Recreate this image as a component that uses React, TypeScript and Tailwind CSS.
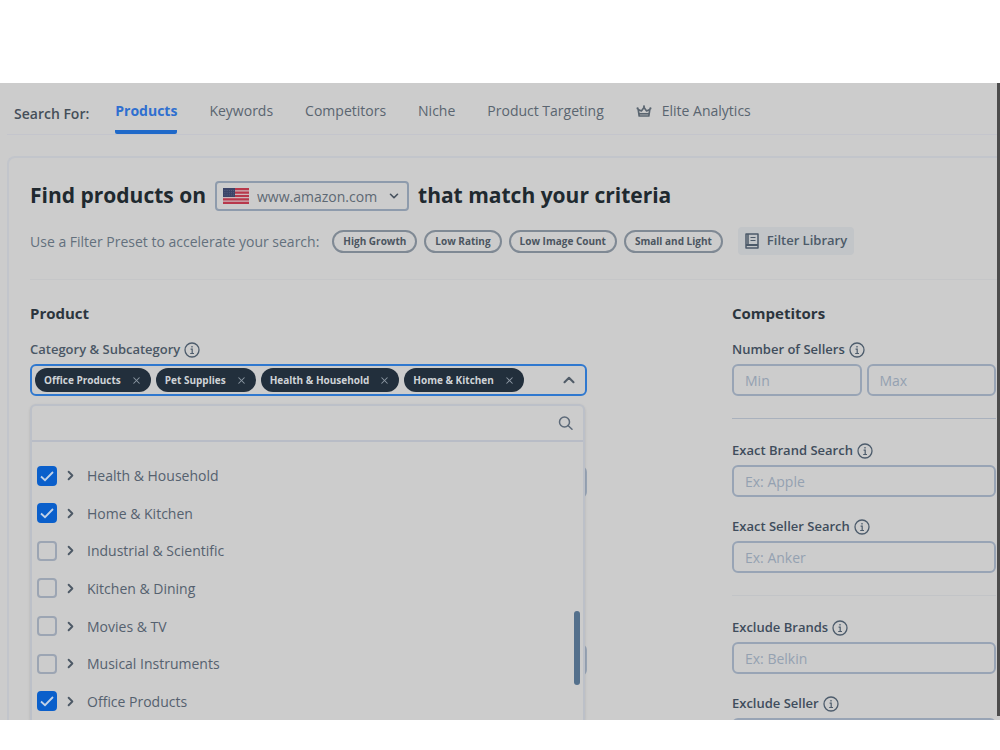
import React, { useState } from "react";
import { ChevronDown, ChevronRight, ChevronUp, X } from "lucide-react";

const tabs = ["Products", "Keywords", "Competitors", "Niche", "Product Targeting"];
const presets = ["High Growth", "Low Rating", "Low Image Count", "Small and Light"];
const selected = ["Office Products", "Pet Supplies", "Health & Household", "Home & Kitchen"];

const categories = [
  { name: "Health & Household", checked: true },
  { name: "Home & Kitchen", checked: true },
  { name: "Industrial & Scientific", checked: false },
  { name: "Kitchen & Dining", checked: false },
  { name: "Movies & TV", checked: false },
  { name: "Musical Instruments", checked: false },
  { name: "Office Products", checked: true },
];

const InfoIcon = () => (
  <svg className="size-4 shrink-0 text-[#4d5c6c]" viewBox="0 0 16 16" fill="none" stroke="currentColor">
    <circle cx="8" cy="8" r="7" strokeWidth="1.3" />
    <path d="M6.6 7.2H8.2V11.4M6.2 11.5H10" strokeWidth="1.2" />
    <circle cx="8" cy="4.8" r="0.5" fill="currentColor" strokeWidth="0.6" />
  </svg>
);

const CrownIcon = () => (
  <svg className="h-[14px] w-4" viewBox="0 0 16 14" fill="none" stroke="currentColor" strokeWidth="1.7" strokeLinejoin="round">
    <path d="M3.2 12 2.2 5.4 5.4 7 8 3.6 10.6 7l3.2-1.6-1 6.6Z" />
    <path d="M3 9.8h10" />
    <circle cx="8" cy="2.2" r="1" fill="currentColor" stroke="none" />
    <circle cx="1.6" cy="4.4" r="1.1" fill="currentColor" stroke="none" />
    <circle cx="14.4" cy="4.4" r="1.1" fill="currentColor" stroke="none" />
  </svg>
);

const LibraryIcon = () => (
  <svg className="h-4 w-[14px]" viewBox="0 0 14 16" fill="none" stroke="currentColor" strokeWidth="1.5">
    <path d="M1 1h12v14H1Z" strokeLinejoin="round" />
    <path d="M1 12h12" strokeWidth="2" />
    <path d="M3 1v11" />
    <path d="M5.5 4.5h5M5.5 7.5h5" strokeWidth="1.2" />
  </svg>
);

const SearchIcon = () => (
  <svg className="size-4 text-[#5c6978]" viewBox="0 0 16 16" fill="none" stroke="currentColor" strokeWidth="1.5">
    <circle cx="7.5" cy="7" r="5" />
    <path d="m11 10.5 4 3.7" strokeLinecap="round" />
  </svg>
);

const Flag = () => (
  <svg className="h-4 w-[26px] shrink-0" viewBox="0 0 26 16">
    <rect width="26" height="16" fill="#cdb9bc" />
    <path d="M0 1.2h26M0 4.6h26M0 8h26M0 11.4h26M0 14.8h26" stroke="#b8384b" strokeWidth="2.2" />
    <rect width="12" height="9" fill="#3c4568" />
    <path d="M1.5 2.5h10M1.5 4.7h10M1.5 6.9h10" stroke="#7a809a" strokeWidth="0.6" strokeDasharray="0.8 1.4" />
  </svg>
);

type FieldProps = { id: string; label: string; placeholders: string[] };

const Field = ({ id, label, placeholders }: FieldProps) => (
  <div className="flex flex-col gap-1">
    <div className="flex h-5 items-center gap-1">
      <label htmlFor={`${id}-0`} className="text-[13px] font-semibold text-[#3f4d5c]">
        {label}
      </label>
      <InfoIcon />
    </div>
    <div className="flex gap-[5px]">
      {placeholders.map((text, i) => (
        <input
          key={text}
          id={`${id}-${i}`}
          aria-label={i > 0 ? `${label} ${text}` : undefined}
          placeholder={text}
          className="h-8 w-full min-w-0 rounded-md border-2 border-[#98a4b5] px-[11px] text-[14px] text-[#3f4d5c] placeholder:text-[#94a1b1]"
        />
      ))}
    </div>
  </div>
);

const CategoryRow = ({ name, checked }: { name: string; checked: boolean }) => {
  const [on, setOn] = useState(checked);

  return (
    <li className="flex items-center gap-1.5">
      <label className="grid size-5">
        <input
          type="checkbox"
          aria-label={name}
          checked={on}
          onChange={() => setOn(!on)}
          className="col-start-1 row-start-1 size-5 appearance-none rounded border-2 border-[#9ca5b3] checked:border-[#0a5fcb] checked:bg-[#0a5fcb]"
        />
        {on && (
          <svg
            className="pointer-events-none col-start-1 row-start-1 size-5"
            viewBox="0 0 20 20"
            fill="none"
            stroke="#c3d3e8"
            strokeWidth="1.8"
          >
            <path d="m4 10.5 4 3.7L16 6" />
          </svg>
        )}
      </label>
      <button aria-label={`Expand ${name}`} className="text-[#4d5966]">
        <ChevronRight size={15} strokeWidth={3} />
      </button>
      <span className="pl-[3px] text-[14px] text-[#55616f]">{name}</span>
    </li>
  );
};

const App = () => {
  const [open, setOpen] = useState(true);

  return (
    <div className="flex h-screen flex-col bg-white pt-[83px] pb-[30px] font-['Open_Sans','Noto_Sans',sans-serif]">
      <div className="flex min-h-0 flex-1 bg-[#cccccc]">
        <main className="flex min-w-0 flex-1 flex-col overflow-hidden pl-[7px]">
          <nav className="flex h-[52px] shrink-0 items-stretch gap-8 border-b border-[#c4c5cc] pl-[7px] text-[14px] text-[#5a6570]">
            <span className="-mr-1.5 pt-5 font-semibold text-[#454f59]">Search For:</span>
            {tabs.map((tab, i) => (
              <a
                key={tab}
                href="#"
                className={
                  i === 0
                    ? "rounded-b-xs border-b-4 border-[#1f69c9] pt-[17px] font-bold text-[#2f6fd0]"
                    : "pt-[17px] font-medium"
                }
              >
                {tab}
              </a>
            ))}
            <a href="#" className="flex items-center gap-2.5 self-start pt-[17px] font-medium">
              <CrownIcon />
              Elite Analytics
            </a>
          </nav>

          <section className="mt-[21px] flex min-h-0 flex-1 flex-col rounded-tl-lg border-t-2 border-l-2 border-[#c2c5cb] pl-[21px]">
            <h1 className="mt-[23px] flex h-[30px] shrink-0 items-center gap-[9px] text-[21px] font-bold text-[#20292f]">
              Find products on
              <span className="flex h-[30px] w-[194px] items-center rounded border-2 border-[#8e9bac] px-1.5">
                <Flag />
                <select
                  aria-label="Marketplace"
                  className="min-w-0 flex-1 appearance-none pl-2 text-[14px] font-normal text-[#5d6873]"
                >
                  <option>www.amazon.com</option>
                </select>
                <ChevronDown size={14} strokeWidth={2.8} className="text-[#46515e]" />
              </span>
              that match your criteria
            </h1>

            <div className="mt-4 flex h-7 shrink-0 items-center gap-[7px]">
              <p className="pr-1.5 text-[14px] text-[#63707d]">Use a Filter Preset to accelerate your search:</p>
              {presets.map((preset) => (
                <button
                  key={preset}
                  className="h-[23px] rounded-full border-2 border-[#7f8994] px-[9px] text-[10px] font-bold text-[#4b5560]"
                >
                  {preset}
                </button>
              ))}
              <button className="ml-2 flex h-7 items-center gap-2 rounded bg-[#c2c5c8] px-[7px] text-[13px] font-semibold text-[#4c5a69]">
                <LibraryIcon />
                Filter Library
              </button>
            </div>

            <hr className="mt-6 border-[#c5c6c8]" />

            <div className="flex min-h-0 flex-1 justify-between pr-px">
              <div className="flex w-[557px] flex-col">
                <h2 className="mt-[22px] h-6 text-[15px] font-bold text-[#2b353e]">Product</h2>
                <div className="mt-[14px] flex h-5 shrink-0 items-center gap-1">
                  <span className="text-[13px] font-semibold text-[#4a5765]">Category & Subcategory</span>
                  <InfoIcon />
                </div>
                <div className="mt-1 flex h-8 shrink-0 items-center gap-[5px] rounded-md border-2 border-[#2f78cf] px-[3px]">
                  {selected.map((item) => (
                    <span
                      key={item}
                      className="flex h-6 items-center gap-2.5 rounded-full bg-[#222f3c] px-[9px] text-[10px] font-bold text-[#cfd3d7]"
                    >
                      {item}
                      <button aria-label={`Remove ${item}`} className="text-[#8d98a3]">
                        <X size={11} strokeWidth={2.2} />
                      </button>
                    </span>
                  ))}
                  <button aria-label="Toggle categories" className="mr-1 ml-auto text-[#515c68]" onClick={() => setOpen(!open)}>
                    <ChevronUp size={18} strokeWidth={2.8} />
                  </button>
                </div>

                <div className="relative mt-2 min-h-0 flex-1">
                  {/* fields of the product column, under the open menu */}
                  <div className="pt-[62px]">
                    <input aria-label="Price" className="block h-8 w-full rounded-md border-2 border-[#98a4b5]" />
                    <input aria-label="Revenue" className="mt-[146px] block h-8 w-full rounded-md border-2 border-[#98a4b5]" />
                  </div>
                  {open && (
                    <div className="absolute inset-y-0 right-0.5 left-0 flex flex-col rounded-t-md border-x-2 border-t-2 border-[#bcc0c8] bg-[#cccccc] shadow">
                      <div className="flex h-9 shrink-0 items-center border-b-2 border-[#b8bcc6] pr-2.5">
                        <input type="search" aria-label="Search categories" className="h-full min-w-0 flex-1 px-3 text-[13px] outline-none" />
                        <SearchIcon />
                      </div>
                      <div className="flex min-h-0 flex-1 justify-between pr-[3px]">
                        <ul className="mt-[15px] grid flex-1 auto-rows-fr pl-[5px]">
                          {categories.map((category) => (
                            <CategoryRow key={category.name} {...category} />
                          ))}
                        </ul>
                        <div className="mt-[169px] h-[74px] w-[6px] rounded-full bg-[#54708c]" />
                      </div>
                    </div>
                  )}
                </div>
              </div>

              <div className="w-[264px]">
                <h2 className="mt-[22px] h-6 text-[15px] font-bold text-[#2b353e]">Competitors</h2>
                <div className="mt-[14px]">
                  <Field id="sellers" label="Number of Sellers" placeholders={["Min", "Max"]} />
                </div>
                <hr className="my-[22px] border-[#a9b1bd]" />
                <div className="space-y-5">
                  <Field id="brand" label="Exact Brand Search" placeholders={["Ex: Apple"]} />
                  <Field id="seller" label="Exact Seller Search" placeholders={["Ex: Anker"]} />
                </div>
                <hr className="my-[22px] border-[#c2c4c7]" />
                <div className="space-y-5">
                  <Field id="exclude-brands" label="Exclude Brands" placeholders={["Ex: Belkin"]} />
                  <Field id="exclude-seller" label="Exclude Seller" placeholders={["Ex: Anker"]} />
                </div>
              </div>
            </div>
          </section>
        </main>
        <div className="mb-1 w-[3px] bg-[#4c4c4c]" />
      </div>
    </div>
  );
};

export default App;
